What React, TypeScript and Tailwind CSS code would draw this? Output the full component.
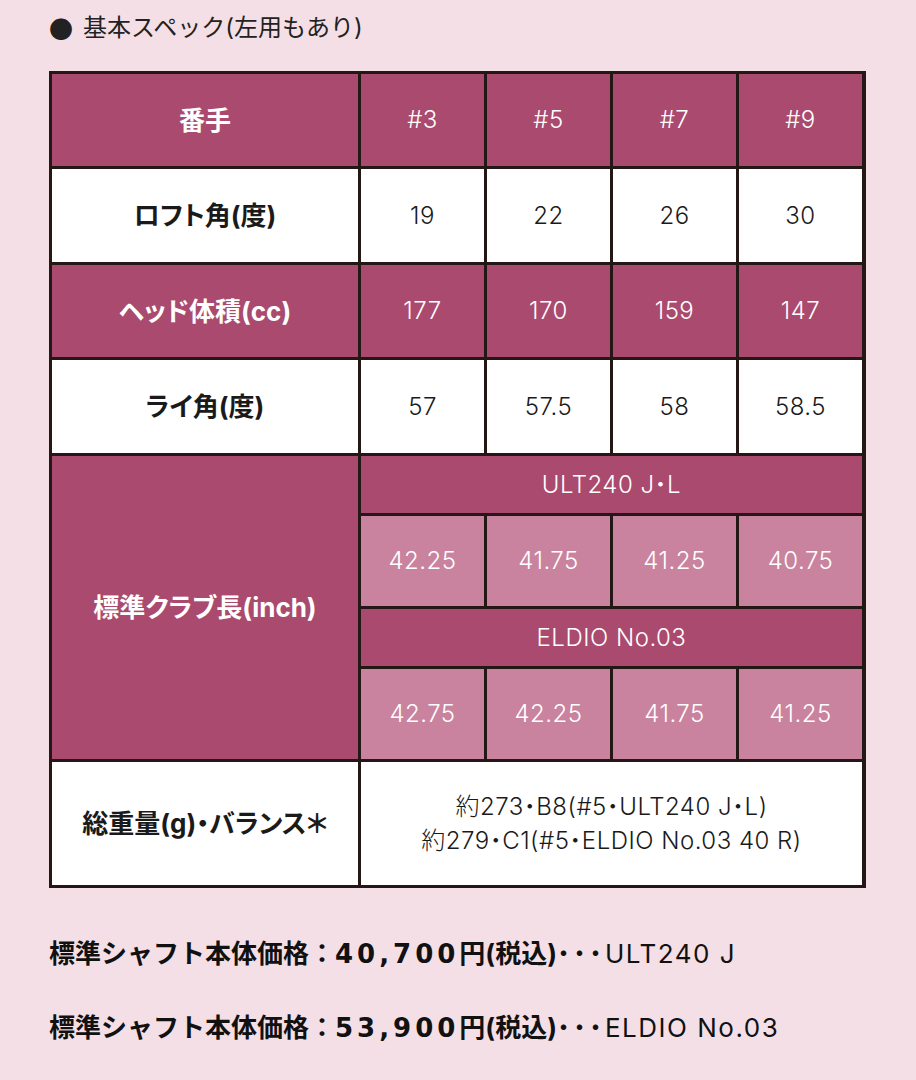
const font = { fontFamily: 'Inter, "Noto Sans CJK JP", sans-serif' };
const wideBold = { fontFamily: '"DejaVu Sans", "Noto Sans CJK JP", sans-serif' };

const dark = 'bg-[#aa4a6e] text-white';
const light = 'bg-[#c9839e] text-white';
const white = 'bg-white text-[#1a1a1a]';

function Cell({ className, children }: { className: string; children: React.ReactNode }) {
  return <div className={`flex items-center justify-center text-center ${className}`}>{children}</div>;
}

function Label({ className, children }: { className: string; children: React.ReactNode }) {
  return <Cell className={`${className} text-[26px] font-bold tracking-normal`}>{children}</Cell>;
}

export default function App() {
  const loft = ['19', '22', '26', '30'];
  const head = ['177', '170', '159', '147'];
  const lie = ['57', '57.5', '58', '58.5'];
  const ult = ['42.25', '41.75', '41.25', '40.75'];
  const eldio = ['42.75', '42.25', '41.75', '41.25'];

  return (
    <div className="min-h-[1080px] w-[916px] bg-[#f5dfe7] pl-[49px] pt-[12px] text-[#1a1a1a]" style={font}>
      <div className="flex items-center gap-[10px] text-[24px] leading-[32px] text-[#222]">
        <span className="text-[24px]" style={{ fontFamily: '"Noto Sans CJK JP", sans-serif' }}>●</span>
        <span>基本スペック(左用もあり)</span>
      </div>

      <div className="mt-[27px] grid w-[817px] grid-cols-[306px_123px_123px_123px_123px] grid-rows-[92px_93px_92px_93px_57px_90px_57px_90px_123px] gap-[3px] bg-[#231815] p-[3px] text-[24px] font-light tracking-[0.5px] [font-feature-settings:'palt']">
        <Label className={dark}>番手</Label>
        {['#3', '#5', '#7', '#9'].map((v) => (
          <Cell key={v} className={dark}>{v}</Cell>
        ))}

        <Label className={white}>ロフト角(度)</Label>
        {loft.map((v, i) => (
          <Cell key={i} className={white}>{v}</Cell>
        ))}

        <Label className={dark}>ヘッド体積(cc)</Label>
        {head.map((v, i) => (
          <Cell key={i} className={dark}>{v}</Cell>
        ))}

        <Label className={white}>ライ角(度)</Label>
        {lie.map((v, i) => (
          <Cell key={i} className={white}>{v}</Cell>
        ))}

        <Label className={`${dark} row-span-4`}>標準クラブ長(inch)</Label>
        <Cell className={`${dark} col-span-4`}>ULT240 J・L</Cell>
        {ult.map((v, i) => (
          <Cell key={i} className={light}>{v}</Cell>
        ))}
        <Cell className={`${dark} col-span-4`}>ELDIO No.03</Cell>
        {eldio.map((v, i) => (
          <Cell key={i} className={light}>{v}</Cell>
        ))}

        <Label className={white}>総重量(g)・バランス＊</Label>
        <Cell className={`${white} col-span-4 flex-col leading-[34px]`}>
          <span>約273・B8(#5・ULT240 J・L)</span>
          <span>約279・C1(#5・ELDIO No.03 40 R)</span>
        </Cell>
      </div>

      <div className="mt-[48px] flex flex-col gap-[38px] text-[26px] leading-[36px] text-[#111]">
        <p>
          <span className="font-bold">
            標準シャフト本体価格：
            <span className="tracking-[4px]" style={wideBold}>40,700</span>
            円(税込)
          </span>
          <span className="tracking-[3px] [font-feature-settings:'palt']">・・・</span>
          <span className="tracking-[1.5px]">ULT240 J</span>
        </p>
        <p>
          <span className="font-bold">
            標準シャフト本体価格：
            <span className="tracking-[4px]" style={wideBold}>53,900</span>
            円(税込)
          </span>
          <span className="tracking-[3px] [font-feature-settings:'palt']">・・・</span>
          <span className="tracking-[1.5px]">ELDIO No.03</span>
        </p>
      </div>
    </div>
  );
}
